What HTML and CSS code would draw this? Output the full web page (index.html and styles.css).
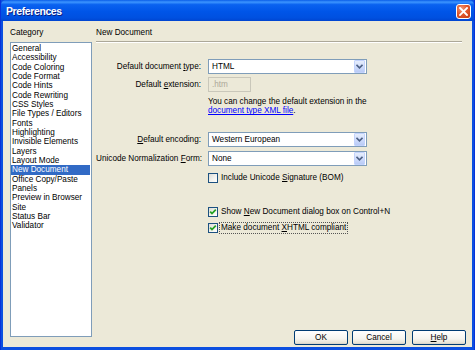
FILE: index.html
```html
<!DOCTYPE html>
<html>
<head>
<meta charset="utf-8">
<link rel="stylesheet" href="styles.css">
</head>
<body>
<div class="window">
  <div class="titlebar">
    <span class="title">Preferences</span>
    <span class="close"><svg width="9" height="9" viewBox="0 0 9 9"><path d="M1 1L8 8M8 1L1 8" stroke="#fff" stroke-width="1.8" stroke-linecap="square"/></svg></span>
  </div>
  <div class="client">
    <div class="leftcol">
      <div class="caption">Category</div>
      <ul class="listbox">
        <li>General</li>
        <li>Accessibility</li>
        <li>Code Coloring</li>
        <li>Code Format</li>
        <li>Code Hints</li>
        <li>Code Rewriting</li>
        <li>CSS Styles</li>
        <li>File Types / Editors</li>
        <li>Fonts</li>
        <li>Highlighting</li>
        <li>Invisible Elements</li>
        <li>Layers</li>
        <li>Layout Mode</li>
        <li class="sel">New Document</li>
        <li>Office Copy/Paste</li>
        <li>Panels</li>
        <li>Preview in Browser</li>
        <li>Site</li>
        <li>Status Bar</li>
        <li>Validator</li>
      </ul>
    </div>
    <div class="rightcol">
      <div class="caption">New Document</div>
      <div class="sep"></div>
      <div class="form">
        <div class="row r1">
          <label class="lbl">Default document <u>t</u>ype:</label>
          <div class="select"><span class="val">HTML</span><span class="drop"><svg width="7" height="5" viewBox="0 0 7 5"><path d="M0.5 0.8L3.5 3.8L6.5 0.8" fill="none" stroke="#4d6185" stroke-width="1.6"/></svg></span></div>
        </div>
        <div class="row r2">
          <label class="lbl">Default <u>e</u>xtension:</label>
          <div class="input disabled">.htm</div>
        </div>
        <div class="row r3">
          <div class="lbl"></div>
          <p class="note">You can change the default extension in the<br><a class="link">document type XML file</a>.</p>
        </div>
        <div class="row r4">
          <label class="lbl"><u>D</u>efault encoding:</label>
          <div class="select"><span class="val">Western European</span><span class="drop"><svg width="7" height="5" viewBox="0 0 7 5"><path d="M0.5 0.8L3.5 3.8L6.5 0.8" fill="none" stroke="#4d6185" stroke-width="1.6"/></svg></span></div>
        </div>
        <div class="row r5">
          <label class="lbl">Unicode Normalization <u>F</u>orm:</label>
          <div class="select"><span class="val">None</span><span class="drop"><svg width="7" height="5" viewBox="0 0 7 5"><path d="M0.5 0.8L3.5 3.8L6.5 0.8" fill="none" stroke="#4d6185" stroke-width="1.6"/></svg></span></div>
        </div>
        <div class="row r6">
          <div class="lbl"></div>
          <span class="check"></span><span class="ctext">Include Unicode <u>S</u>ignature (BOM)</span>
        </div>
        <div class="row r7">
          <div class="lbl"></div>
          <span class="check on"><svg width="8" height="8" viewBox="0 0 8 8"><path d="M1.2 3.6L3 5.6L6.8 1.6" fill="none" stroke="#21a121" stroke-width="1.7"/></svg></span><span class="ctext">Show <u>N</u>ew Document dialog box on Control+N</span>
        </div>
        <div class="row r8">
          <div class="lbl"></div>
          <span class="check on"><svg width="8" height="8" viewBox="0 0 8 8"><path d="M1.2 3.6L3 5.6L6.8 1.6" fill="none" stroke="#21a121" stroke-width="1.7"/></svg></span><span class="ctext focus">Make document <u>X</u>HTML compliant</span>
        </div>
      </div>
      <div class="buttons">
        <button class="btn">OK</button>
        <button class="btn">Cancel</button>
        <button class="btn help"><u>H</u>elp</button>
      </div>
    </div>
  </div>
</div>
</body>
</html>
```
FILE: styles.css
```css
* { box-sizing: border-box; }
html, body { margin: 0; padding: 0; }
body {
  width: 475px;
  height: 350px;
  overflow: hidden;
  font-family: "Liberation Sans", Arial, sans-serif;
  font-size: 8.2px;
  color: #000;
}
.window {
  width: 475px;
  height: 350px;
  display: flex;
  flex-direction: column;
  background: #0b4fe0;
  border-left: 1px solid #0831d9;
  border-right: 1px solid #0831d9;
}
.titlebar {
  height: 21px;
  flex: none;
  display: flex;
  align-items: center;
  justify-content: space-between;
  padding: 0 3px 0 5px;
  background: linear-gradient(#0a5de8 0%, #3d95ff 10%, #0a62f0 22%, #0055e8 55%, #0050e0 85%, #0045d0 100%);
  border-radius: 5px 5px 0 0;
}
.title {
  color: #fff;
  font-family: "Liberation Sans", Arial, sans-serif;
  font-weight: bold;
  font-size: 10.5px;
  letter-spacing: -0.4px;
  text-shadow: 1px 1px 0 #0a1e80;
  margin-top: 1px;
}
.close {
  width: 15px;
  height: 15px;
  margin-top: 1px;
  border: 1px solid #fff;
  border-radius: 3px;
  background: radial-gradient(circle at 35% 30%, #f29a7a 0%, #e2582c 45%, #c23a12 100%);
  display: flex;
  align-items: center;
  justify-content: center;
}
.close svg { display: block; }
.client {
  flex: 1;
  margin: 0 2px 3px 2px;
  background: #ece9d8;
  display: flex;
  padding: 7px 6px 2px 7px;
}
.caption {
  height: 10px;
  line-height: 10px;
  white-space: nowrap;
}
.leftcol {
  width: 82px;
  flex: none;
  display: flex;
  flex-direction: column;
  padding-bottom: 8px;
}
.listbox {
  flex: 1;
  margin: 4px 0 0 0;
  padding: 0;
  list-style: none;
  background: #fff;
  border: 1px solid #7f9db9;
}
.listbox li {
  height: 9.33px;
  line-height: 9.33px;
  padding-left: 1px;
  margin: 0 1px 0 0;
  white-space: nowrap;
}
.listbox li:first-child { margin-top: 1px; }
.listbox li.sel {
  background: #316ac5;
  color: #fff;
}
.rightcol {
  flex: 1;
  margin-left: 4px;
  display: flex;
  flex-direction: column;
}
.sep {
  margin: 3px 4px 0 0;
  height: 2px;
  border-top: 1px solid #aca899;
  border-bottom: 1px solid #fff;
}
.form {
  margin-top: 16px;
  display: flex;
  flex-direction: column;
}
.row {
  display: flex;
  align-items: center;
}
.lbl {
  width: 105px;
  flex: none;
  margin-right: 7px;
  text-align: right;
  white-space: nowrap;
}
u { text-decoration: underline; text-underline-offset: 1px; }
.select {
  width: 159px;
  height: 15px;
  background: #fff;
  border: 1px solid #7f9db9;
  display: flex;
  align-items: center;
  justify-content: space-between;
  padding: 0 1px 0 3px;
}
.drop {
  width: 11px;
  height: 13px;
  border: 1px solid #c3d3fd;
  border-radius: 1px;
  background: linear-gradient(#e6eefc 0%, #d1ddfc 50%, #b9cbf6 100%);
  display: flex;
  align-items: center;
  justify-content: center;
}
.drop svg { display: block; }
.r2 { margin-top: 3px; }
.input {
  width: 43px;
  height: 15px;
  line-height: 13px;
  padding-left: 3px;
  border: 1px solid #c9c7ba;
}
.input.disabled {
  background: #ece9d8;
  color: #aca899;
}
.r3 { margin-top: 5px; align-items: flex-start; }
.note {
  margin: 0;
  line-height: 9.4px;
  white-space: nowrap;
}
.link {
  color: #0000ff;
  text-decoration: underline;
}
.r4 { margin-top: 16px; }
.r5 { margin-top: 4px; }
.r6 { margin-top: 7px; height: 10px; }
.r7 { margin-top: 24px; height: 10px; }
.r8 { margin-top: 6px; height: 10px; }
.check {
  width: 10px;
  height: 10px;
  flex: none;
  border: 1px solid #1c5180;
  background: linear-gradient(135deg, #dcdcd7 0%, #f4f4f0 60%, #fff 100%);
  display: flex;
  align-items: center;
  justify-content: center;
}
.check svg { display: block; }
.ctext {
  margin-left: 1px;
  padding: 0 1px;
  line-height: 10px;
  white-space: nowrap;
  border: 1px solid transparent;
}
.ctext.focus {
  border: 1px dotted #555;
}
.buttons {
  margin-top: auto;
  display: flex;
  justify-content: flex-end;
}
.btn {
  width: 54px;
  height: 15px;
  padding: 0;
  margin-left: 4px;
  font-family: inherit;
  font-size: 8.2px;
  color: #000;
  border: 1px solid #003c74;
  border-radius: 2px;
  background: linear-gradient(#ffffff 0%, #f5f4ef 60%, #e6e3d6 90%, #d6d0c5 100%);
}
.btn.help { margin-left: 6px; }
```
